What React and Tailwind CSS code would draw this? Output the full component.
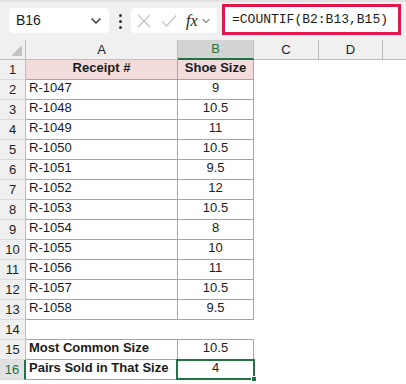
import React from 'react';

const rows = [
    { n: 1, a: 'Receipt #', b: 'Shoe Size', head: true },
    { n: 2, a: 'R-1047', b: '9' },
    { n: 3, a: 'R-1048', b: '10.5' },
    { n: 4, a: 'R-1049', b: '11' },
    { n: 5, a: 'R-1050', b: '10.5' },
    { n: 6, a: 'R-1051', b: '9.5' },
    { n: 7, a: 'R-1052', b: '12' },
    { n: 8, a: 'R-1053', b: '10.5' },
    { n: 9, a: 'R-1054', b: '8' },
    { n: 10, a: 'R-1055', b: '10' },
    { n: 11, a: 'R-1056', b: '11' },
    { n: 12, a: 'R-1057', b: '10.5' },
    { n: 13, a: 'R-1058', b: '9.5' },
    { n: 14, a: '', b: '', empty: true },
    { n: 15, a: 'Most Common Size', b: '10.5', bold: true },
    { n: 16, a: 'Pairs Sold in That Size', b: '4', bold: true, selected: true },
];

const Chevron = ({ className }) => (
    <svg width="12" height="8" viewBox="0 0 12 8" className={className}>
        <path d="M1.5 1.5 L6 6 L10.5 1.5" fill="none" stroke="currentColor" strokeWidth="1.4" />
    </svg>
);

const Row = ({ r }) => {
    const cellBorder = r.empty ? 'border-b border-[#a6a6a6]' : 'border-b border-r border-[#a6a6a6]';
    return (
        <div className="flex h-[20px]">
            <div
                className={
                    'w-[26px] shrink-0 flex items-center justify-center text-[13px] border-b border-[#dadada] ' +
                    (r.selected
                        ? 'bg-[#e1e1e1] text-[#217346] border-r-2 border-r-[#217346]'
                        : 'bg-[#f0f0f0] text-[#222] border-r border-r-[#bdbdbd]')
                }
            >
                {r.n}
            </div>
            <div
                className={
                    'w-[152px] shrink-0 flex items-end pb-[2px] text-[13px] ' +
                    (r.head ? 'justify-center bg-[#f2dcdb] font-bold ' : 'pl-[3px] ') +
                    (r.bold ? 'font-bold ' : '') +
                    cellBorder
                }
            >
                {r.a}
            </div>
            <div
                className={
                    'relative w-[76px] shrink-0 flex items-end justify-center pb-[2px] text-[13px] ' +
                    (r.head ? 'bg-[#f2dcdb] font-bold ' : '') +
                    cellBorder
                }
            >
                {r.b}
                {r.selected && (
                    <div className="absolute -left-[2px] -top-[1px] w-[79px] h-[21px] border-2 border-[#217346]">
                        <div className="absolute -right-[4px] -bottom-[4px] w-[6px] h-[6px] bg-[#217346] border border-white" />
                    </div>
                )}
            </div>
            <div className="flex-1 bg-white" />
        </div>
    );
};

export default function App() {
    return (
        <div className="w-[406px] h-[384px] overflow-hidden bg-white text-[#1b1b1b]" style={{ fontFamily: '"Liberation Sans", Arial, sans-serif' }}>
            {/* Formula bar */}
            <div className="h-[40px] bg-[#f0f0f0] border-t-2 border-[#e2e2e2] flex items-start">
                <div className="mt-[6px] ml-[9px] w-[100px] h-[25px] bg-white rounded-[4px] flex items-center justify-between pl-[7px] pr-[7px] text-[14px]">
                    <span>B16</span>
                    <Chevron className="text-[#333]" />
                </div>
                <div className="mt-[12px] w-[22px] flex flex-col items-center gap-[3px]">
                    <span className="w-[3px] h-[3px] bg-[#333] rounded-full" />
                    <span className="w-[3px] h-[3px] bg-[#333] rounded-full" />
                    <span className="w-[3px] h-[3px] bg-[#333] rounded-full" />
                </div>
                <div className="mt-[6px] w-[86px] h-[25px] bg-white rounded-[4px] flex items-center pl-[5px]">
                    <svg width="14" height="14" viewBox="0 0 14 14" className="ml-[1px]">
                        <path d="M1 1 L13 13 M13 1 L1 13" stroke="#c4c4c4" strokeWidth="1.3" />
                    </svg>
                    <svg width="16" height="14" viewBox="0 0 16 14" className="ml-[10px]">
                        <path d="M1 7.5 L5.5 12 L15 1.5" fill="none" stroke="#c4c4c4" strokeWidth="1.3" />
                    </svg>
                    <span className="ml-[9px] italic text-[16px] text-[#222]" style={{ fontFamily: '"Liberation Serif", serif' }}>
                        fx
                    </span>
                    <Chevron className="ml-[2px] text-[#777] scale-75" />
                </div>
                <div className="mt-[2px] ml-[5px] w-[179px] h-[31px] bg-white border-[3px] border-[#e3174b] flex items-center pl-[7px] text-[13px]" style={{ fontFamily: '"Liberation Mono", monospace' }}>
                    =COUNTIF(B2:B13,B15)
                </div>
            </div>

            {/* Column headers */}
            <div className="flex h-[20px] bg-[#f0f0f0] text-[13px] text-[#222]">
                <div className="relative w-[26px] shrink-0 border-r border-b border-[#bdbdbd]">
                    <div className="absolute right-[3px] bottom-[3px] w-0 h-0 border-l-[11px] border-l-transparent border-b-[11px] border-b-[#c3c3c3]" />
                </div>
                <div className="w-[152px] shrink-0 flex items-center justify-center border-r border-b border-[#bdbdbd]">A</div>
                <div className="w-[76px] shrink-0 flex items-center justify-center bg-[#d3d3d3] text-[#217346] border-b-2 border-[#217346] border-r border-r-[#bdbdbd]">B</div>
                <div className="w-[65px] shrink-0 flex items-center justify-center border-r border-b border-[#bdbdbd]">C</div>
                <div className="w-[64px] shrink-0 flex items-center justify-center border-r border-b border-[#bdbdbd]">D</div>
                <div className="flex-1 border-b border-[#bdbdbd]" />
            </div>

            {rows.map((r) => (
                <Row key={r.n} r={r} />
            ))}
        </div>
    );
}
